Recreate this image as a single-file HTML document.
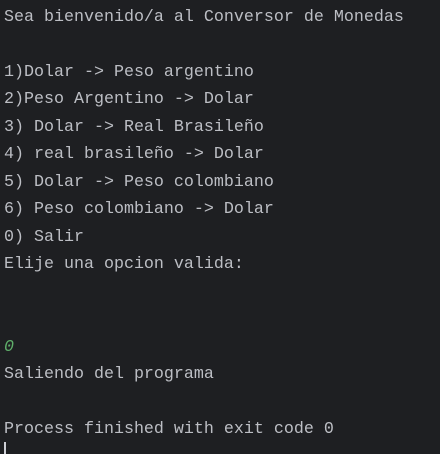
<!DOCTYPE html><html><head><style>
html,body{margin:0;padding:0;background:#1e1f22;width:440px;height:451px;overflow:hidden}
pre{margin:0;position:absolute;left:4px;top:4px;font-family:"Liberation Mono",monospace;font-size:16.67px;line-height:27.47px;color:#bcbec4}
.g{color:#5fae6a;font-style:italic}
.cur{position:absolute;left:4px;top:442px;width:2px;height:12px;background:#ced0d6}
</style></head><body><pre>Sea bienvenido/a al Conversor de Monedas

1)Dolar -&gt; Peso argentino
2)Peso Argentino -&gt; Dolar
3) Dolar -&gt; Real Brasileño
4) real brasileño -&gt; Dolar
5) Dolar -&gt; Peso colombiano
6) Peso colombiano -&gt; Dolar
0) Salir
Elije una opcion valida:


<span class="g">0</span>
Saliendo del programa

Process finished with exit code 0</pre><div class="cur"></div></body></html>
